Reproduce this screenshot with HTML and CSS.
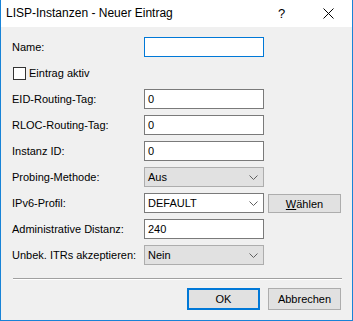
FILE: index.html
```html
<!DOCTYPE html>
<html lang="de">
<head>
    <meta charset="UTF-8">
    <title>LISP-Instanzen - Neuer Eintrag</title>
    <link rel="stylesheet" href="styles.css">
</head>
<body>
    <div class="window">
        <div class="titlebar">
            <span class="title">LISP-Instanzen - Neuer Eintrag</span>
            <span class="help">?</span>
            <span class="close">
                <svg width="11" height="11" viewBox="0 0 11 11"><path d="M0.5 0.5 L10.5 10.5 M10.5 0.5 L0.5 10.5" stroke="#000" stroke-width="1" fill="none"/></svg>
            </span>
        </div>
        <div class="content">
            <div class="row">
                <label class="lbl">Name:</label>
                <div class="field focus"></div>
            </div>
            <div class="row">
                <span class="check"></span>
                <span class="check_lbl">Eintrag aktiv</span>
            </div>
            <div class="row">
                <label class="lbl">EID-Routing-Tag:</label>
                <div class="field">0</div>
            </div>
            <div class="row">
                <label class="lbl">RLOC-Routing-Tag:</label>
                <div class="field">0</div>
            </div>
            <div class="row">
                <label class="lbl">Instanz ID:</label>
                <div class="field">0</div>
            </div>
            <div class="row">
                <label class="lbl">Probing-Methode:</label>
                <div class="field dropdown">Aus
                    <svg class="chev" width="9" height="5" viewBox="0 0 9 5"><path d="M0.5 0.5 L4.5 4.5 L8.5 0.5" stroke="#606060" fill="none"/></svg>
                </div>
            </div>
            <div class="row">
                <label class="lbl">IPv6-Profil:</label>
                <div class="field combo">DEFAULT
                    <svg class="chev" width="9" height="5" viewBox="0 0 9 5"><path d="M0.5 0.5 L4.5 4.5 L8.5 0.5" stroke="#606060" fill="none"/></svg>
                </div>
                <div class="btn small"><u>W</u>ählen</div>
            </div>
            <div class="row">
                <label class="lbl">Administrative Distanz:</label>
                <div class="field">240</div>
            </div>
            <div class="row">
                <label class="lbl">Unbek. ITRs akzeptieren:</label>
                <div class="field dropdown">Nein
                    <svg class="chev" width="9" height="5" viewBox="0 0 9 5"><path d="M0.5 0.5 L4.5 4.5 L8.5 0.5" stroke="#606060" fill="none"/></svg>
                </div>
            </div>
            <div class="separator"></div>
            <div class="buttons">
                <div class="btn default">OK</div>
                <div class="btn">Abbrechen</div>
            </div>
        </div>
    </div>
</body>
</html>
```
FILE: styles.css
```css
body {
    margin: 0;
    background: #ffffff;
}
.window {
    width: 351px;
    height: 320px;
    border: 1px solid #1883d7;
    border-top: none;
    background: #f0f0f0;
    font-family: "Liberation Sans", Arial, sans-serif;
    font-size: 11px;
    color: #000;
    display: flex;
    flex-direction: column;
}
.titlebar {
    height: 27px;
    background: #ffffff;
    display: flex;
    align-items: center;
    font-size: 12px;
    position: relative;
}
.title {
    margin-left: 5px;
    margin-top: -1px;
    flex: 1;
}
.help {
    width: 12px;
    margin-right: 33px;
    font-size: 13px;
    margin-top: -1px;
}
.close {
    display: flex;
    margin-right: 18px;
    margin-top: -1px;
}
.content {
    padding: 10px 11px 0 11px;
    display: flex;
    flex-direction: column;
}
.row {
    display: flex;
    align-items: center;
    height: 20px;
    margin-bottom: 6px;
}
.lbl {
    width: 132px;
}
.field {
    width: 118px;
    height: 18px;
    border: 1px solid #7a7a7a;
    background: #fff;
    display: flex;
    align-items: center;
    padding-left: 3px;
    box-sizing: content-box;
    width: 115px;
    position: relative;
}
.field.focus {
    border-color: #0078d7;
}
.dropdown {
    background: #e1e1e1;
    border-color: #adadad;
}
.chev {
    position: absolute;
    right: 5px;
    top: 7px;
}
.check {
    width: 11px;
    height: 11px;
    border: 1px solid #333;
    background: #fff;
    margin-left: 1px;
}
.check_lbl {
    margin-left: 3px;
}
.btn {
    width: 71px;
    height: 20px;
    border: 1px solid #adadad;
    background: #e1e1e1;
    display: flex;
    align-items: center;
    justify-content: center;
}
.btn.small {
    height: 17px;
    margin-left: 4px;
    margin-top: 1px;
}
.btn.default {
    border: 2px solid #0078d7;
    width: 69px;
    height: 18px;
}
.separator {
    margin: 7px 0 0 1px;
    width: 329px;
    height: 1px;
    background: #a0a0a0;
    border-bottom: 1px solid #ffffff;
}
.buttons {
    display: flex;
    justify-content: flex-end;
    gap: 8px;
    margin-top: 8px;
}
```
